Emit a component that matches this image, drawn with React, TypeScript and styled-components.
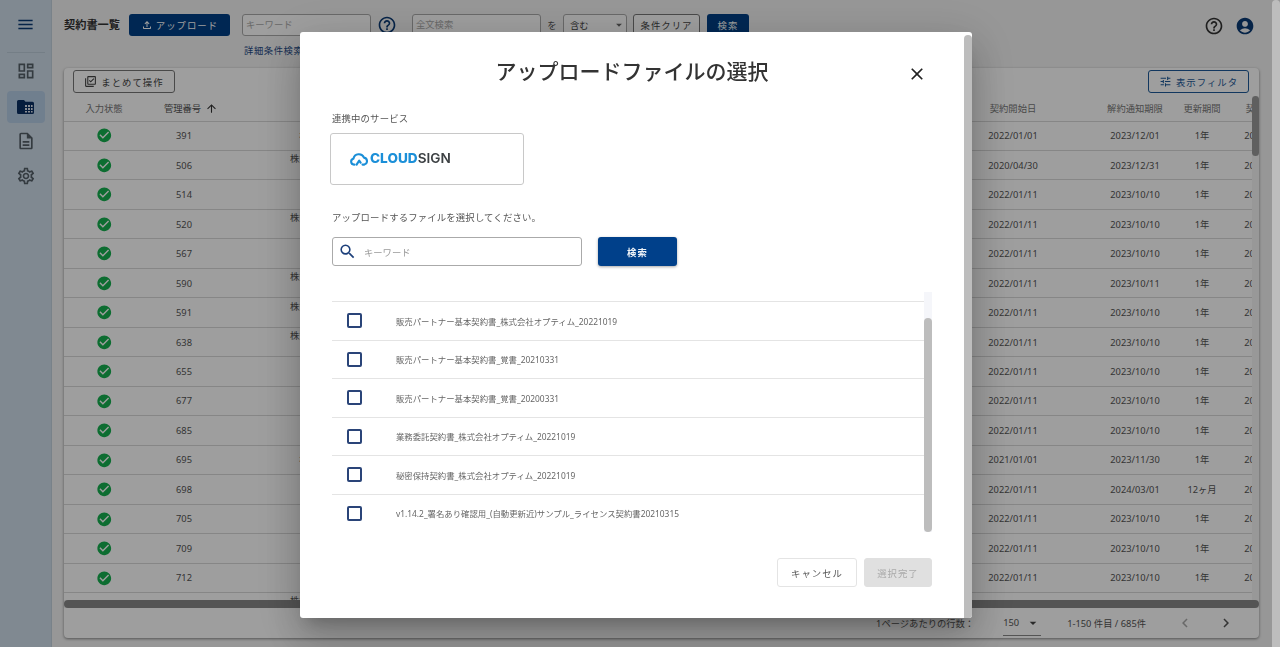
import styled, { createGlobalStyle } from "styled-components";
import {
  MdMenu,
  MdOutlineDashboard,
  MdOutlineDescription,
  MdOutlineSettings,
  MdCheckCircle,
  MdHelpOutline,
  MdAccountCircle,
  MdOutlineFileUpload,
  MdArrowUpward,
  MdOutlineLibraryAddCheck,
  MdTune,
  MdClose,
  MdSearch,
  MdArrowDropDown,
  MdChevronLeft,
  MdChevronRight,
} from "react-icons/md";

const GlobalStyle = createGlobalStyle`
  html, body { margin: 0; padding: 0; height: 100%; overflow: hidden; }
  body {
    font-family: "Noto Sans", "Noto Sans CJK JP", sans-serif;
    background: #f4f4f4;
    color: #333;
  }
  * { box-sizing: border-box; }
`;

const Page = styled.div`
  display: flex;
  height: 647px;
  width: 1280px;
`;

const Sidebar = styled.aside`
  width: 52px;
  flex: none;
  background: #cfdeeb;
  border-right: 1px solid #c4d2de;
  display: flex;
  flex-direction: column;
  align-items: center;
`;

const MenuSlot = styled.div`
  width: 100%;
  height: 52px;
  display: flex;
  align-items: center;
  justify-content: center;
  padding-bottom: 4px;
  color: #0a3a75;
  font-size: 19px;
`;

const SideRule = styled.div`
  width: 38px;
  height: 1px;
  background: #bccbd8;
  margin-bottom: 0;
`;

const SideItem = styled.div<{ $active?: boolean }>`
  width: 38px;
  height: ${(p) => (p.$active ? "32px" : "35px")};
  margin-top: ${(p) => (p.$active ? "3px" : "0")};
  border-radius: 4px;
  display: flex;
  align-items: center;
  justify-content: center;
  font-size: 20px;
  color: #555f68;
  background: ${(p) => (p.$active ? "#b5cde6" : "transparent")};
`;

const Main = styled.main`
  flex: 1;
  min-width: 0;
  padding: 14px 21px 0 12px;
  display: flex;
  flex-direction: column;
`;

const Header = styled.header`
  display: flex;
  align-items: flex-start;
  height: 54px;
`;

const Title = styled.h1`
  margin: 0 9px 0 0;
  width: 56px;
  font-size: 11.2px;
  font-weight: 700;
  line-height: 22px;
  color: #333;
  white-space: nowrap;
`;

const PrimaryButton = styled.button<{ $w: number }>`
  width: ${(p) => p.$w}px;
  height: 22px;
  border: 0;
  border-radius: 3px;
  background: #003f86;
  color: #fff;
  font: inherit;
  font-size: 9.4px;
  letter-spacing: 1px;
  display: flex;
  align-items: center;
  justify-content: center;
  gap: 3px;
  padding: 0;
  flex: none;
  svg { font-size: 12px; }
`;

const SearchStack = styled.div`
  display: flex;
  flex-direction: column;
  margin-left: 12px;
`;

const FakeInput = styled.div<{ $w: number }>`
  width: ${(p) => p.$w}px;
  height: 22px;
  border: 1px solid #aaa;
  border-radius: 3px;
  background: #fff;
  color: #aaa;
  font-size: 9.3px;
  line-height: 20px;
  padding-left: 3px;
  flex: none;
`;

const DetailLink = styled.a`
  color: #1d4a85;
  font-size: 9.3px;
  letter-spacing: 0.6px;
  margin: 8px 0 0 2px;
  line-height: 13px;
`;

const HelpIcon = styled.span<{ $ml: number; $color: string }>`
  display: flex;
  font-size: 20px;
  margin-left: ${(p) => p.$ml}px;
  margin-top: 1px;
  color: ${(p) => p.$color};
  flex: none;
`;

const Joiner = styled.span`
  font-size: 9.3px;
  width: 22px;
  text-align: center;
  line-height: 24px;
  color: #555;
  flex: none;
`;

const SelectBox = styled.div`
  width: 64px;
  height: 22px;
  border: 1px solid #aaa;
  border-radius: 3px;
  background: #fff;
  display: flex;
  align-items: center;
  justify-content: space-between;
  font-size: 9.3px;
  padding-left: 6px;
  color: #444;
  flex: none;
  svg { font-size: 14px; color: #666; }
`;

const OutlineButton = styled.button<{ $w: number; $tone?: string }>`
  width: ${(p) => p.$w}px;
  height: 23px;
  border: 1px solid ${(p) => p.$tone ?? "#777"};
  border-radius: 3px;
  background: #fff;
  color: ${(p) => p.$tone ?? "#444"};
  font: inherit;
  font-size: 9.4px;
  letter-spacing: 1px;
  display: flex;
  align-items: center;
  justify-content: center;
  gap: 4px;
  padding: 0;
  flex: none;
  svg { font-size: 13px; }
`;

const ClearButton = styled(OutlineButton)`
  height: 22px;
  margin: 0 7px 0 6px;
`;

const HeaderEnd = styled.div`
  margin-left: auto;
  display: flex;
  gap: 11px;
  padding-right: 4px;
  margin-top: 1px;
`;

const Card = styled.section`
  width: 1195px;
  height: 570px;
  background: #fff;
  border-radius: 4px;
  box-shadow: 0 1px 3px rgba(0, 0, 0, 0.45);
  display: flex;
  flex-direction: column;
  overflow: hidden;
`;

const CardTools = styled.div`
  height: 28px;
  flex: none;
  display: flex;
  align-items: flex-start;
  justify-content: space-between;
  padding: 2px 10px 0 9px;
`;

const TableFrame = styled.div`
  display: flex;
  height: 504px;
  flex: none;
`;

const TableClip = styled.div`
  width: 1188px;
  overflow: hidden;
`;

const TableGrid = styled.div`
  width: 1240px;
`;

const Row = styled.div<{ $head?: boolean }>`
  display: grid;
  grid-template-columns: 80px 80px 64px 180px 522px 110px 70px 64px 70px;
  height: ${(p) => (p.$head ? "25.5px" : "29.47px")};
  border-bottom: 1px solid #d8d8d8;
  align-items: center;
  font-size: 9.3px;
  color: ${(p) => (p.$head ? "#777" : "#555")};
  line-height: 13px;
  text-align: center;
`;

const NumberHead = styled.span`
  display: flex;
  align-items: center;
  justify-content: center;
  gap: 4px;
  color: #555;
  padding-left: 14px;
  svg { font-size: 13px; color: #333; }
`;

const StatusCell = styled.span`
  display: flex;
  justify-content: center;
  font-size: 16.5px;
  color: #15b04f;
`;

const VScroll = styled.div`
  width: 7px;
  background: #f6f6f6;
`;

const VThumb = styled.div`
  height: 60px;
  margin-top: 0;
  border-radius: 4px;
  background: #999;
`;

const HScroll = styled.div`
  height: 8px;
  flex: none;
  background: #f0f0f0;
`;

const HThumb = styled.div`
  width: 100%;
  height: 8px;
  border-radius: 4px;
  background: #888;
`;

const Pager = styled.div`
  flex: 1;
  display: flex;
  align-items: center;
  justify-content: flex-end;
  font-size: 9.3px;
  color: #555;
  padding-right: 24px;
`;

const PagerSelect = styled.div`
  width: 38px;
  height: 25px;
  margin: 0 26px 0 29px;
  border-bottom: 1px solid #888;
  display: flex;
  align-items: center;
  justify-content: space-between;
  svg { font-size: 16px; color: #444; }
`;

const PagerArrow = styled.span<{ $off?: boolean; $ml: number }>`
  display: flex;
  font-size: 18px;
  margin-left: ${(p) => p.$ml}px;
  color: ${(p) => (p.$off ? "#aaa" : "#555")};
`;

const Overlay = styled.div`
  position: fixed;
  inset: 0;
  display: grid;
  grid-template-columns: 1fr 8px;
  background: rgba(0, 0, 0, 0.38);
`;

const OverlayBody = styled.div`
  display: flex;
  justify-content: center;
  padding-top: 32px;
`;

const PageScroll = styled.div`
  background: #bdbdbd;
  border-radius: 4px 4px 0 0;
`;

const Modal = styled.div`
  width: 672px;
  height: 586px;
  background: #fff;
  border-radius: 3px;
  display: flex;
  box-shadow: 0 11px 15px -7px rgba(0, 0, 0, 0.2), 0 24px 38px 3px rgba(0, 0, 0, 0.14),
    0 9px 46px 8px rgba(0, 0, 0, 0.12);
  overflow: hidden;
`;

const ModalBody = styled.div`
  width: 664px;
  padding: 24px 32px 0;
  display: flex;
  flex-direction: column;
`;

const ModalScroll = styled.div`
  width: 8px;
  margin-top: 3px;
  background: #bdbdbd;
  border-radius: 4px 4px 0 0;
`;

const ModalHead = styled.div`
  display: grid;
  grid-template-columns: 1fr auto 1fr;
  height: 30px;
  align-items: center;
`;

const ModalTitle = styled.h2`
  grid-column: 2;
  margin: 0;
  font-size: 21px;
  font-weight: 500;
  line-height: 30px;
  color: #333;
  white-space: nowrap;
`;

const CloseSlot = styled.span`
  justify-self: end;
  display: flex;
  font-size: 20px;
  color: #222;
  margin: 6px 5px 0 0;
`;

const SectionLabel = styled.p<{ $mt: number }>`
  margin: ${(p) => p.$mt}px 0 0;
  font-size: 9.4px;
  line-height: 14px;
  letter-spacing: 0.15px;
  color: #555;
`;

const ServiceCard = styled.div`
  width: 194px;
  height: 52px;
  margin: 7px 0 0 -2px;
  border: 1px solid #c8c8c8;
  border-radius: 3px;
  display: flex;
  align-items: center;
  padding-left: 19px;
  gap: 2px;
`;

const LogoText = styled.span`
  font-family: Inter, "Noto Sans", sans-serif;
  font-size: 13.6px;
  font-weight: 800;
  color: #1b8fd8;
  line-height: 1;
  white-space: nowrap;
  span {
    font-weight: 600;
    color: #3c4043;
  }
`;

const SearchRow = styled.div`
  display: flex;
  gap: 16px;
  margin-top: 12px;
`;

const SearchField = styled.div`
  width: 250px;
  height: 29px;
  border: 1px solid #aaa;
  border-radius: 3px;
  display: flex;
  align-items: center;
  padding-left: 5px;
  gap: 7px;
  font-size: 9.3px;
  color: #999;
  svg { font-size: 19px; color: #1c3f7a; }
`;

const SearchButton = styled.button`
  width: 79px;
  height: 29px;
  border: 0;
  border-radius: 3px;
  background: #00408a;
  color: #f0f4f8;
  font: inherit;
  font-size: 9.4px;
  font-weight: 700;
  letter-spacing: 1px;
  box-shadow: 0 1px 3px rgba(0, 0, 0, 0.35);
`;

const ListFrame = styled.div`
  display: flex;
  height: 240px;
  margin-top: 26px;
`;

const FileList = styled.div`
  flex: 1;
  padding-top: 9px;
`;

const FileRow = styled.label`
  display: flex;
  align-items: center;
  height: 38.5px;
  border-top: 1px solid #e4e4e4;
  padding-left: 15px;
  font-size: 8.4px;
  color: #666;
`;

const Tick = styled.span`
  width: 15px;
  height: 15px;
  border: 2px solid #2a4478;
  border-radius: 2px;
  margin-right: 34px;
  flex: none;
`;

const ListScroll = styled.div`
  width: 8px;
  background: #f5f6fa;
  display: flex;
  flex-direction: column;
  justify-content: flex-end;
`;

const ListThumb = styled.div`
  height: 214px;
  border-radius: 4px;
  background: #bdbdbd;
`;

const ModalFoot = styled.div`
  display: flex;
  justify-content: flex-end;
  gap: 7px;
  margin-top: 26px;
`;

const FootButton = styled.button<{ $w: number; $off?: boolean }>`
  width: ${(p) => p.$w}px;
  height: 29px;
  border: 1px solid ${(p) => (p.$off ? "#e0e0e0" : "#e4e4e4")};
  border-radius: 3px;
  background: ${(p) => (p.$off ? "#e0e0e0" : "#fff")};
  color: ${(p) => (p.$off ? "#aaa" : "#555")};
  font: inherit;
  font-size: 9.4px;
  letter-spacing: 1px;
  padding: 0;
`;

const CloudMark = () => (
  <svg width="18" height="14" viewBox="0 0 18 14" fill="none" stroke="#1b8fd8" strokeWidth="2.1" strokeLinecap="round" strokeLinejoin="round">
    <path d="M4.5 12.6H4a3 3 0 0 1-.6-5.9A5.6 5.6 0 0 1 14 5.6a3.6 3.6 0 0 1 .4 7H12.5" />
    <path d="M6.6 12.6 9.2 8.6l1.4 2" />
  </svg>
);

const FolderGrid = () => (
  <svg width="17" height="14" viewBox="0 0 17 14">
    <path d="M1.5 0H7l1.5 1.7h7A1.5 1.5 0 0 1 17 3.2v9.3a1.5 1.5 0 0 1-1.5 1.5h-14A1.5 1.5 0 0 1 0 12.5v-11A1.5 1.5 0 0 1 1.5 0z" fill="#0a2f63" />
    <path d="M8 5h2v2H8zM11 5h2v2h-2zM14 5h1.6v2H14zM8 8h2v2H8zM11 8h2v2h-2zM14 8h1.6v2H14zM8 11h2v1.6H8zM11 11h2v1.6h-2zM14 11h1.6v1.6H14z" fill="#dfe6ef" />
  </svg>
);

const longName = "株式会社オプティムビジネスサービス";
const wrapName = "株式会社オプティムビジネスサービス東日本支社";
const midName = "株式会社オプティム総合";
const shortName = "株式会社オプティム";
const vendorName = "オプティムホールディングス";
const tinyName = "オプティム株式";

const rows = [
  ["391", longName, "2022/01/01", "2023/12/01", "1年", "2024/01/01"],
  ["506", wrapName, "2020/04/30", "2023/12/31", "1年", "2024/08/31"],
  ["514", midName, "2022/01/11", "2023/10/10", "1年", "2024/01/11"],
  ["520", wrapName, "2022/01/11", "2023/10/10", "1年", "2024/01/11"],
  ["567", midName, "2022/01/11", "2023/10/10", "1年", "2024/01/11"],
  ["590", wrapName, "2022/01/11", "2023/10/11", "1年", "2024/01/11"],
  ["591", wrapName, "2022/01/11", "2023/10/10", "1年", "2024/01/11"],
  ["638", wrapName, "2022/01/11", "2023/10/10", "1年", "2024/01/11"],
  ["655", shortName, "2022/01/11", "2023/10/10", "1年", "2024/01/11"],
  ["677", shortName, "2022/01/11", "2023/10/10", "1年", "2024/01/11"],
  ["685", shortName, "2022/01/11", "2023/10/10", "1年", "2024/01/11"],
  ["695", longName, "2021/01/01", "2023/11/30", "1年", "2023/12/31"],
  ["698", midName, "2022/01/11", "2024/03/01", "12ヶ月", "2025/03/01"],
  ["705", vendorName, "2022/01/11", "2023/10/10", "1年", "2024/01/11"],
  ["709", vendorName, "2022/01/11", "2023/10/10", "1年", "2024/01/11"],
  ["712", tinyName, "2022/01/11", "2023/10/10", "1年", "2024/01/11"],
];

const files = [
  "販売パートナー基本契約書_株式会社オプティム_20221019",
  "販売パートナー基本契約書_覚書_20210331",
  "販売パートナー基本契約書_覚書_20200331",
  "業務委託契約書_株式会社オプティム_20221019",
  "秘密保持契約書_株式会社オプティム_20221019",
  "v1.14.2_署名あり確認用_(自動更新近)サンプル_ライセンス契約書20210315",
];

export default function App() {
  return (
    <>
      <GlobalStyle />
      <Page>
        <Sidebar>
          <MenuSlot>
            <MdMenu />
          </MenuSlot>
          <SideRule />
          <SideItem>
            <MdOutlineDashboard />
          </SideItem>
          <SideItem $active>
            <FolderGrid />
          </SideItem>
          <SideItem>
            <MdOutlineDescription />
          </SideItem>
          <SideItem>
            <MdOutlineSettings />
          </SideItem>
        </Sidebar>
        <Main>
          <Header>
            <Title>契約書一覧</Title>
            <PrimaryButton $w={101}>
              <MdOutlineFileUpload />
              アップロード
            </PrimaryButton>
            <SearchStack>
              <FakeInput $w={129}>キーワード</FakeInput>
              <DetailLink>詳細条件検索</DetailLink>
            </SearchStack>
            <HelpIcon $ml={6} $color="#0a3a75">
              <MdHelpOutline />
            </HelpIcon>
            <FakeInput $w={129} style={{ marginLeft: 15 }}>
              全文検索
            </FakeInput>
            <Joiner>を</Joiner>
            <SelectBox>
              含む
              <MdArrowDropDown />
            </SelectBox>
            <ClearButton $w={67}>条件クリア</ClearButton>
            <PrimaryButton $w={42}>検索</PrimaryButton>
            <HeaderEnd>
              <HelpIcon $ml={0} $color="#333">
                <MdHelpOutline />
              </HelpIcon>
              <HelpIcon $ml={0} $color="#0a3a75">
                <MdAccountCircle />
              </HelpIcon>
            </HeaderEnd>
          </Header>
          <Card>
            <CardTools>
              <OutlineButton $w={102}>
                <MdOutlineLibraryAddCheck />
                まとめて操作
              </OutlineButton>
              <OutlineButton $w={101} $tone="#1d5a99">
                <MdTune />
                表示フィルタ
              </OutlineButton>
            </CardTools>
            <TableFrame>
              <TableClip>
                <TableGrid>
                  <Row $head>
                    <span>入力状態</span>
                    <NumberHead>
                      管理番号
                      <MdArrowUpward />
                    </NumberHead>
                    <span />
                    <span>契約先名称</span>
                    <span />
                    <span style={{ position: "relative", left: -32 }}>契約開始日</span>
                    <span>解約通知期限</span>
                    <span>更新期間</span>
                    <span>契約終了日</span>
                  </Row>
                  {rows.map((r) => (
                    <Row key={r[0]}>
                      <StatusCell>
                        <MdCheckCircle />
                      </StatusCell>
                      <span>{r[0]}</span>
                      <span />
                      <span>{r[1]}</span>
                      <span />
                      <span style={{ position: "relative", left: -32 }}>{r[2]}</span>
                      <span>{r[3]}</span>
                      <span>{r[4]}</span>
                      <span>{r[5]}</span>
                    </Row>
                  ))}
                  <Row>
                    <span />
                    <span />
                    <span />
                    <span>{wrapName}</span>
                  </Row>
                </TableGrid>
              </TableClip>
              <VScroll>
                <VThumb />
              </VScroll>
            </TableFrame>
            <HScroll>
              <HThumb />
            </HScroll>
            <Pager>
              1ページあたりの行数：
              <PagerSelect>
                150
                <MdArrowDropDown />
              </PagerSelect>
              1-150 件目 / 685件
              <PagerArrow $off $ml={30}>
                <MdChevronLeft />
              </PagerArrow>
              <PagerArrow $ml={23}>
                <MdChevronRight />
              </PagerArrow>
            </Pager>
          </Card>
        </Main>
      </Page>
      <Overlay>
        <OverlayBody>
          <Modal>
            <ModalBody>
              <ModalHead>
                <ModalTitle>アップロードファイルの選択</ModalTitle>
                <CloseSlot>
                  <MdClose />
                </CloseSlot>
              </ModalHead>
              <SectionLabel $mt={26}>連携中のサービス</SectionLabel>
              <ServiceCard>
                <CloudMark />
                <LogoText>
                  CLOUD<span>SIGN</span>
                </LogoText>
              </ServiceCard>
              <SectionLabel $mt={26}>アップロードするファイルを選択してください。</SectionLabel>
              <SearchRow>
                <SearchField>
                  <MdSearch />
                  キーワード
                </SearchField>
                <SearchButton>検索</SearchButton>
              </SearchRow>
              <ListFrame>
                <FileList>
                  {files.map((f) => (
                    <FileRow key={f}>
                      <Tick />
                      {f}
                    </FileRow>
                  ))}
                </FileList>
                <ListScroll>
                  <ListThumb />
                </ListScroll>
              </ListFrame>
              <ModalFoot>
                <FootButton $w={80}>キャンセル</FootButton>
                <FootButton $w={68} $off>
                  選択完了
                </FootButton>
              </ModalFoot>
            </ModalBody>
            <ModalScroll />
          </Modal>
        </OverlayBody>
        <PageScroll />
      </Overlay>
    </>
  );
}
